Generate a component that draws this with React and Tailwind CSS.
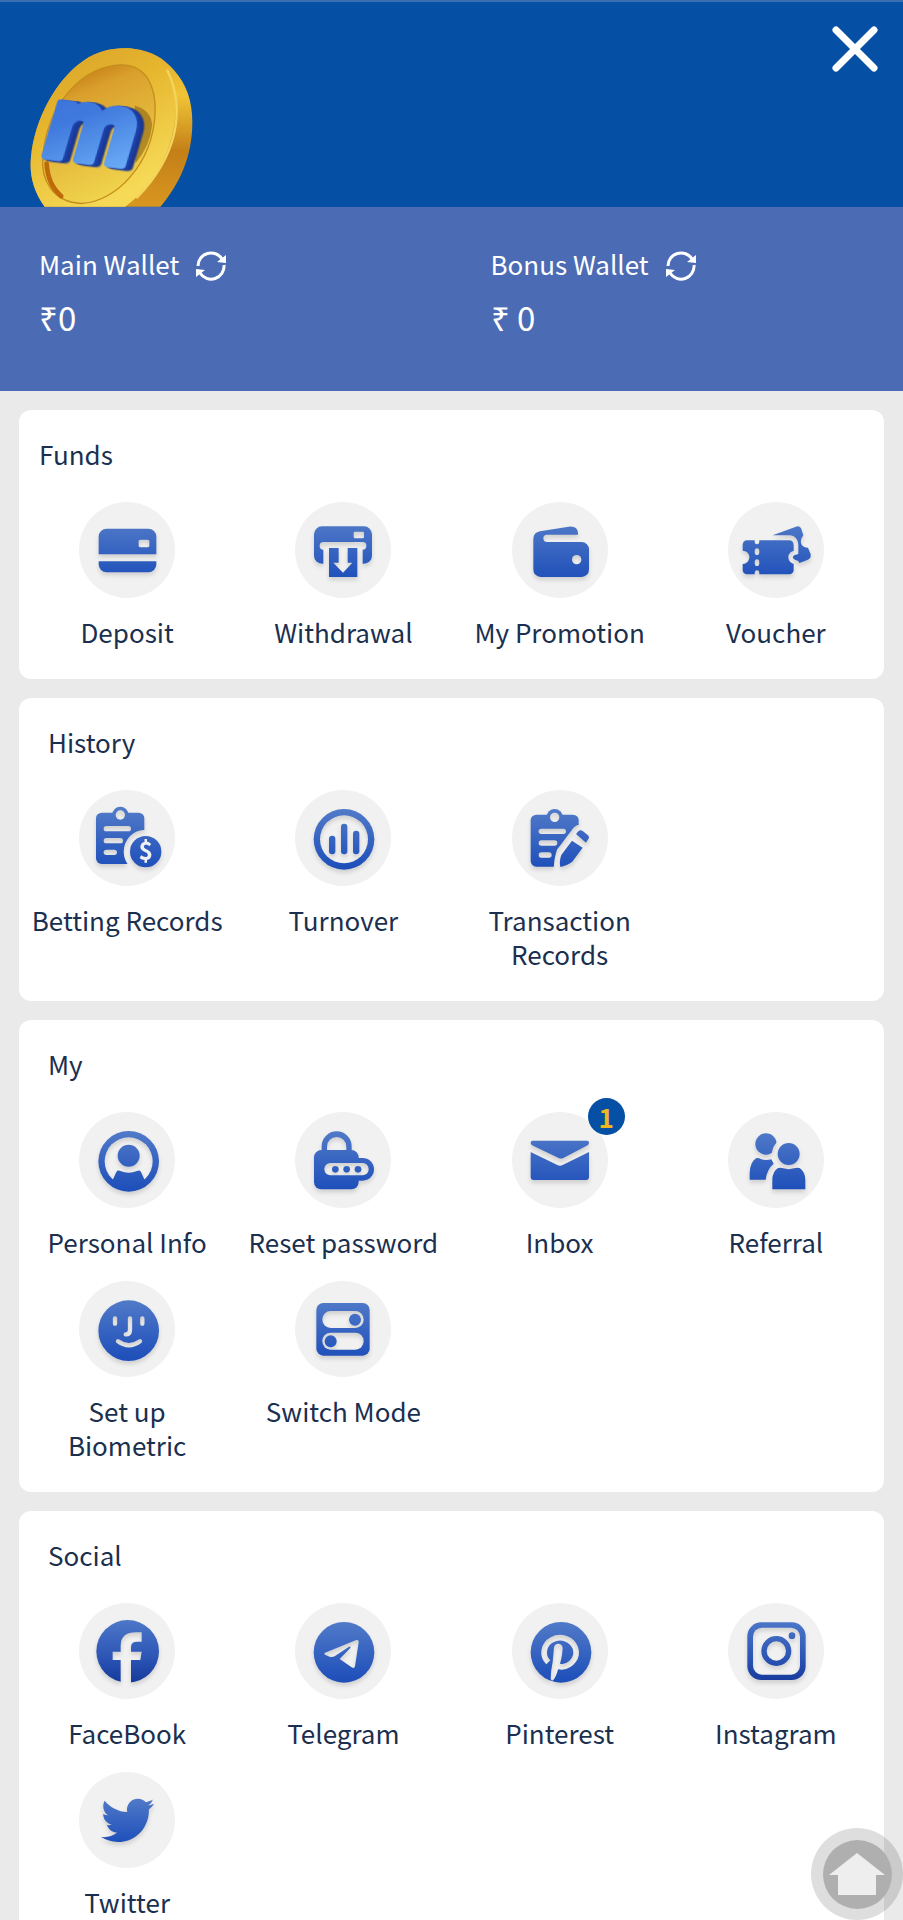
import { FaTwitter } from "react-icons/fa";

// Every icon is drawn on a 288 x 288 grid: base shapes, holes cut out of them, shapes put on top
const icons = {
    deposit: {
        base: (
            <>
                <path d="M59 157v-53a24 24 0 0 1 24-24h125a24 24 0 0 1 24 24v53z" />
                <path d="M59 178h173v9a24 24 0 0 1-24 24H83a24 24 0 0 1-24-24z" />
            </>
        ),
        cut: <rect x="179" y="113" width="32" height="23" rx="5" />,
    },
    withdrawal: {
        base: <rect x="57" y="73" width="174" height="112" rx="24" />,
        cut: (
            <>
                <rect x="176" y="89" width="31" height="20" rx="4" />
                <rect x="74" y="120" width="140" height="23" rx="11" />
                <rect x="85" y="130" width="118" height="60" />
            </>
        ),
        over: <path d="M102 138h29v44h-16l29 30 28-30h-14v-44h29v87h-85z" />,
    },
    promotion: {
        base: (
            <path d="M64 112q0-21 20-24l86-14q26-3 28 18v6h-93a11 11 0 0 0 0 22h104a22 22 0 0 1 22 22v61a22 22 0 0 1-22 22H86a22 22 0 0 1-22-22z" />
        ),
        cut: <circle cx="194" cy="173" r="14" />,
    },
    voucher: {
        base: <rect x="44" y="115" width="153" height="102" rx="13" />,
        cut: (
            <>
                <circle cx="44" cy="166" r="20" />
                <circle cx="201" cy="166" r="20" />
                <ellipse cx="87" cy="117" rx="7" ry="10" />
                <ellipse cx="87" cy="149" rx="7" ry="10" />
                <ellipse cx="87" cy="182" rx="7" ry="10" />
                <ellipse cx="87" cy="215" rx="7" ry="10" />
            </>
        ),
        over: (
            <path d="M134 100l70-26q13-4 17 10l5 16q-14 18-2 32 8 6 16 5l8 20q2 13-10 17l-24 9-3-6q-14-3-17-11l4-6 13-4v-28q-2-26-25-28z" />
        ),
    },
    betting: {
        base: (
            <>
                <rect x="51" y="68" width="145" height="154" rx="17" />
                <circle cx="124" cy="74" r="24" />
            </>
        ),
        cut: (
            <>
                <circle cx="124" cy="75" r="14" />
                <rect x="74" y="108" width="82" height="16" rx="8" />
                <rect x="74" y="144" width="58" height="16" rx="8" />
                <rect x="74" y="179" width="40" height="16" rx="8" />
                <circle cx="200" cy="185" r="66" />
            </>
        ),
        over: (
            <>
                <circle cx="200" cy="185" r="47" />
                <text
                    x="200"
                    y="211"
                    fill="#f1f1f1"
                    fontSize="74"
                    textAnchor="middle"
                    className="font-bold"
                >
                    $
                </text>
            </>
        ),
    },
    turnover: {
        base: <circle cx="147" cy="148" r="91" />,
        cut: <circle cx="147" cy="148" r="72" />,
        over: (
            <>
                <rect x="102" y="137" width="19" height="56" rx="9" />
                <rect x="138" y="101" width="19" height="92" rx="9" />
                <rect x="174" y="122" width="19" height="71" rx="9" />
            </>
        ),
    },
    transaction: {
        base: (
            <>
                <rect x="56" y="74" width="144" height="156" rx="17" />
                <circle cx="128" cy="81" r="24" />
            </>
        ),
        cut: (
            <>
                <circle cx="128" cy="82" r="14" />
                <rect x="80" y="116" width="82" height="16" rx="8" />
                <rect x="80" y="151" width="56" height="16" rx="8" />
                <rect x="80" y="187" width="39" height="16" rx="8" />
                <path d="M206 104q-14 0-22 10l-48 64q-8 16-11 56h80z" />
            </>
        ),
        over: (
            <>
                <path d="M192 132l7-8q6-6 13-1l14 11q8 6 3 13l-7 11z" />
                <path d="M180 152l32 21-30 41q-14 13-37 17-4-17 3-36z" />
            </>
        ),
    },
    personal: {
        base: <circle cx="149" cy="148" r="91" />,
        cut: <circle cx="149" cy="148" r="72" />,
        over: (
            <>
                <circle cx="149" cy="131" r="33" />
                <path d="M101 204l11-24q4-7 12-3 25 10 50 0 8-4 12 3l11 24q-48 50-96 0z" />
            </>
        ),
    },
    reset: {
        base: (
            <>
                <path d="M80 120v-18a45 44 0 0 1 90 0v18z" />
                <rect x="57" y="114" width="134" height="118" rx="22" />
                <rect x="140" y="138" width="97" height="68" rx="34" />
            </>
        ),
        cut: (
            <>
                <path d="M96 114v-10a29 29 0 0 1 58 0v10z" />
                <rect x="88" y="153" width="133" height="37" rx="18" />
            </>
        ),
        over: (
            <>
                <circle cx="121" cy="172" r="10" />
                <circle cx="155" cy="172" r="10" />
                <circle cx="189" cy="172" r="10" />
            </>
        ),
    },
    inbox: {
        base: (
            <>
                <path d="M62 86h163q6 0 6 6 0 5-4 8l-73 38q-7 3-14 0L60 100q-4-3-4-8 0-6 6-6z" />
                <path d="M56 120l80 39q8 4 16 0l79-39v75q0 9-9 9H65q-9 0-9-9z" />
            </>
        ),
    },
    referral: {
        base: (
            <>
                <circle cx="114" cy="96" r="32" />
                <path d="M65 203v-20q1-31 19-44 8-2 14 2 14 5 32 1l7 13q-20 16-24 48z" />
            </>
        ),
        cut: <circle cx="182" cy="126" r="50" />,
        over: (
            <>
                <circle cx="182" cy="126" r="33" />
                <path d="M133 232v-30q1-24 17-34 10-2 16 1 16 5 32 0 8-3 17-1 17 12 17 36v28z" />
            </>
        ),
    },
    biometric: {
        base: <circle cx="149" cy="149" r="91" />,
        cut: (
            <g fill="none" stroke="#000" strokeWidth="13" strokeLinecap="round">
                <path d="M108 112v16M190 112v16M153 112v34q0 14-13 14" />
                <path d="M117 181q33 24 66 0" />
            </g>
        ),
    },
    switch: {
        base: <rect x="64" y="66" width="160" height="158" rx="21" />,
        cut: (
            <>
                <rect x="82" y="90" width="124" height="51" rx="25" />
                <rect x="82" y="155" width="124" height="51" rx="25" />
            </>
        ),
        over: (
            <>
                <circle cx="180" cy="116" r="18" />
                <circle cx="107" cy="181" r="18" />
            </>
        ),
    },
    facebook: {
        deep: true,
        base: <circle cx="146" cy="145" r="94" />,
        cut: <path d="M188 88h-16q-47 0-47 40v18h-24v25h24v70h31v-70h28l4-25h-32v-14q0-16 18-16h14z" />,
    },
    telegram: {
        base: <circle cx="147" cy="148" r="91" />,
        cut: (
            <path d="M90 149l94-38q8-2 7 7l-11 72q-2 8-10 3l-36-25 32-33q2-6-4-4l-42 28q-8 5-16 2l-14-6q-5-3 0-6z" />
        ),
    },
    pinterest: {
        base: <circle cx="147" cy="148" r="91" />,
        cut: (
            <>
                <path
                    d="M109 178a48 44 0 1 1 40 14q-14-1-18-12"
                    fill="none"
                    stroke="#000"
                    strokeWidth="17"
                />
                <path d="M126 134a13 13 0 0 1 26 2q-2 34-14 64-6 22-15 32-6 2-7-5 0-22 6-50z" />
            </>
        ),
    },
    instagram: {
        deep: true,
        base: <rect x="58" y="58" width="175" height="173" rx="42" />,
        cut: <rect x="75" y="74" width="141" height="141" rx="27" />,
        over: (
            <>
                <path
                    fillRule="evenodd"
                    d="M100 144a45 45 0 1 0 90 0 45 45 0 1 0-90 0zm16 0a29 29 0 1 0 58 0 29 29 0 1 0-58 0z"
                />
                <circle cx="192" cy="98" r="10" />
            </>
        ),
    },
    twitter: {
        base: <FaTwitter x="66" y="65" size="160" fill="url(#blueBox)" />,
    },
};

const sections = [
    {
        title: "Funds",
        pad: "pl-5",
        items: [
            { label: "Deposit", icon: "deposit" },
            { label: "Withdrawal", icon: "withdrawal" },
            { label: "My Promotion", icon: "promotion" },
            { label: "Voucher", icon: "voucher" },
        ],
    },
    {
        title: "History",
        pad: "pl-[29px]",
        items: [
            { label: "Betting Records", icon: "betting" },
            { label: "Turnover", icon: "turnover" },
            { label: "Transaction Records", icon: "transaction" },
        ],
    },
    {
        title: "My",
        pad: "pl-[29px]",
        items: [
            { label: "Personal Info", icon: "personal" },
            { label: "Reset password", icon: "reset" },
            { label: "Inbox", icon: "inbox", badge: 1 },
            { label: "Referral", icon: "referral" },
            { label: "Set up Biometric", icon: "biometric" },
            { label: "Switch Mode", icon: "switch" },
        ],
    },
    {
        title: "Social",
        pad: "pl-[29px]",
        items: [
            { label: "FaceBook", icon: "facebook", href: "#facebook" },
            { label: "Telegram", icon: "telegram", href: "#telegram" },
            { label: "Pinterest", icon: "pinterest", href: "#pinterest" },
            { label: "Instagram", icon: "instagram", href: "#instagram" },
            { label: "Twitter", icon: "twitter", href: "#twitter" },
        ],
    },
];

const Gradients = () => (
    <svg className="absolute size-0" aria-hidden="true">
        <defs>
            <linearGradient id="blue" gradientUnits="userSpaceOnUse" x1="0" y1="60" x2="0" y2="230">
                <stop offset="0" stopColor="#5079c8" />
                <stop offset="1" stopColor="#1f50ba" />
            </linearGradient>
            <linearGradient id="blueDeep" gradientUnits="userSpaceOnUse" x1="0" y1="55" x2="0" y2="235">
                <stop offset="0" stopColor="#4c76c8" />
                <stop offset="0.6" stopColor="#2c55b5" />
                <stop offset="1" stopColor="#163b9c" />
            </linearGradient>
            <linearGradient id="blueBox" x1="0" y1="0" x2="0" y2="1">
                <stop offset="0" stopColor="#5079c8" />
                <stop offset="1" stopColor="#1f50ba" />
            </linearGradient>
        </defs>
    </svg>
);

const Icon = ({ name }) => {
    const { base, cut, over, deep } = icons[name];
    return (
        <svg
            viewBox="0 0 288 288"
            className="size-24 drop-shadow-[0_3px_2px_rgba(0,0,0,0.14)]"
            fill={deep ? "url(#blueDeep)" : "url(#blue)"}
            aria-hidden="true"
        >
            <mask id={`cut-${name}`} maskUnits="userSpaceOnUse" x="0" y="0" width="288" height="288">
                <rect width="288" height="288" fill="#fff" />
                <g fill="#000">{cut}</g>
            </mask>
            <g mask={`url(#cut-${name})`}>{base}</g>
            {over}
        </svg>
    );
};

const MenuItem = ({ label, icon, badge, href }) => {
    const Tag = href ? "a" : "button";
    return (
        <Tag href={href} className="flex flex-col items-center justify-start gap-[17px] px-3 text-center">
            <span className="relative size-24 rounded-full bg-[#f1f1f1]">
                <Icon name={icon} />
                {badge && (
                    <span className="absolute -top-[14px] -right-[17px] flex size-[37px] items-center justify-center rounded-full bg-[#054fa4] text-[26px] leading-none font-bold text-[#efb71d]">
                        {badge}
                    </span>
                )}
            </span>
            <span>{label}</span>
        </Tag>
    );
};

const Section = ({ title, pad, items }) => (
    <section className="rounded-xl bg-white pt-[27px] pb-[30px]">
        <h2 className={`mb-[31px] ${pad}`}>{title}</h2>
        <div className="grid grid-cols-4 gap-y-[22px]">
            {items.map((item) => (
                <MenuItem key={item.label} {...item} />
            ))}
        </div>
    </section>
);

const Coin = () => (
    <svg viewBox="90 50 490 480" className="ml-[30px] h-40 w-[163px]" role="img" aria-label="Logo">
        <defs>
            <linearGradient id="coinSide" x1="0" y1="0" x2="0" y2="1">
                <stop offset="0" stopColor="#e3ac2c" />
                <stop offset="0.3" stopColor="#f0c436" />
                <stop offset="0.65" stopColor="#c47f18" />
                <stop offset="1" stopColor="#d9971f" />
            </linearGradient>
            <linearGradient id="coinRim" x1="0" y1="0" x2="0.5" y2="1">
                <stop offset="0" stopColor="#d69f28" />
                <stop offset="0.45" stopColor="#e6b62e" />
                <stop offset="1" stopColor="#f6da57" />
            </linearGradient>
            <linearGradient id="coinDish" x1="0" y1="0" x2="0.35" y2="1">
                <stop offset="0" stopColor="#b86406" />
                <stop offset="0.3" stopColor="#d9a02c" />
                <stop offset="1" stopColor="#f0d24c" />
            </linearGradient>
            <linearGradient id="coinLetter" x1="0" y1="0" x2="0.4" y2="1">
                <stop offset="0" stopColor="#3b6edb" />
                <stop offset="0.5" stopColor="#4079dd" />
                <stop offset="1" stopColor="#68aaf5" />
            </linearGradient>
        </defs>
        <path
            fill="url(#coinSide)"
            d="M134 530C98 480 88 430 93 380C104 265 170 145 252 90C300 58 350 50 400 55C460 62 492 85 522 118C562 162 578 215 578 275C578 380 540 460 482 530z"
        />
        <path
            fill="url(#coinRim)"
            d="M134 530C98 480 88 430 93 380C104 265 170 145 252 90C300 58 350 50 400 55C462 66 496 100 515 150C555 290 490 445 376 530z"
        />
        <path
            fill="none"
            stroke="#f3d55c"
            strokeWidth="7"
            strokeLinecap="round"
            d="M503 120C560 240 530 380 412 502"
        />
        <path
            fill="url(#coinDish)"
            stroke="#c58d1e"
            strokeWidth="4"
            d="M245 520C160 516 120 450 129 375C142 225 245 105 365 103C440 103 470 170 466 250C458 400 350 515 245 520z"
        />
        <path
            fill="none"
            stroke="#bf6a08"
            strokeWidth="14"
            strokeLinecap="round"
            d="M140 400C142 440 158 475 184 498"
        />
        <path fill="#8d6410" opacity="0.6" d="M405 225q50 15 52 60-5 60-50 115z" />
        <text
            x="130"
            y="376"
            transform="rotate(7 130 380)"
            fontSize="296"
            strokeWidth="22"
            strokeLinejoin="round"
            fill="url(#coinLetter)"
            stroke="url(#coinLetter)"
            className="font-['Inter',sans-serif] font-bold italic [filter:drop-shadow(8px_1px_0_#1d42ab)_drop-shadow(8px_1px_0_#1a3a9a)_drop-shadow(6px_1px_0_#18348a)]"
        >
            m
        </text>
    </svg>
);

const RefreshIcon = () => (
    <svg viewBox="0 0 30 30" className="size-[30px]" fill="none" stroke="currentColor" strokeWidth="3">
        <path d="M2 15A13 13 0 0 1 26 8M28 14A13 13 0 0 1 4 22" />
        <path fill="currentColor" stroke="none" d="M30 4v8l-9-1zM0 26v-8l9 1z" />
    </svg>
);

const Wallet = ({ name, amount }) => (
    <div className="pl-[39px]">
        <div className="flex items-center gap-[17px]">
            <span>{name}</span>
            <button aria-label={`Refresh ${name}`} className="pt-1">
                <RefreshIcon />
            </button>
        </div>
        <p className="mt-4 text-[33px] leading-10">{amount}</p>
    </div>
);

const App = () => {
    return (
        <div className="h-screen overflow-y-auto bg-[#eaeaea] font-['Noto_Sans_CJK_SC',sans-serif] text-[26px] leading-[34px] text-[#1b2f4f] [scrollbar-width:none]">
            <Gradients />
            <header className="flex h-[207px] items-end justify-between border-t-2 border-[#3a70b2] bg-[#054fa4]">
                <Coin />
                <button aria-label="Close" className="mt-[23px] mr-6 self-start text-white">
                    <svg viewBox="0 0 48 48" className="size-12" stroke="currentColor" strokeWidth="7" strokeLinecap="round">
                        <path d="M5 5l38 38M43 5L5 43" />
                    </svg>
                </button>
            </header>
            <div className="grid grid-cols-2 bg-[#4b6cb4] pt-10 pb-[54px] text-white">
                <Wallet name="Main Wallet" amount="₹0" />
                <Wallet name="Bonus Wallet" amount="₹ 0" />
            </div>
            <main className="flex flex-col gap-[19px] p-[19px]">
                {sections.map((section) => (
                    <Section key={section.title} {...section} />
                ))}
            </main>
            <button
                aria-label="Home"
                className="fixed right-0 bottom-0 flex size-[92px] items-center justify-center rounded-full bg-black/13"
            >
                <span className="flex size-[69px] items-center justify-center rounded-full bg-[#afafaf]">
                    <svg viewBox="0 0 56 42" className="h-[42px] w-14" fill="#eee">
                        <path d="M28 0l28 22h-9v20H9V22H0z" />
                    </svg>
                </span>
            </button>
        </div>
    );
};

export default App;
